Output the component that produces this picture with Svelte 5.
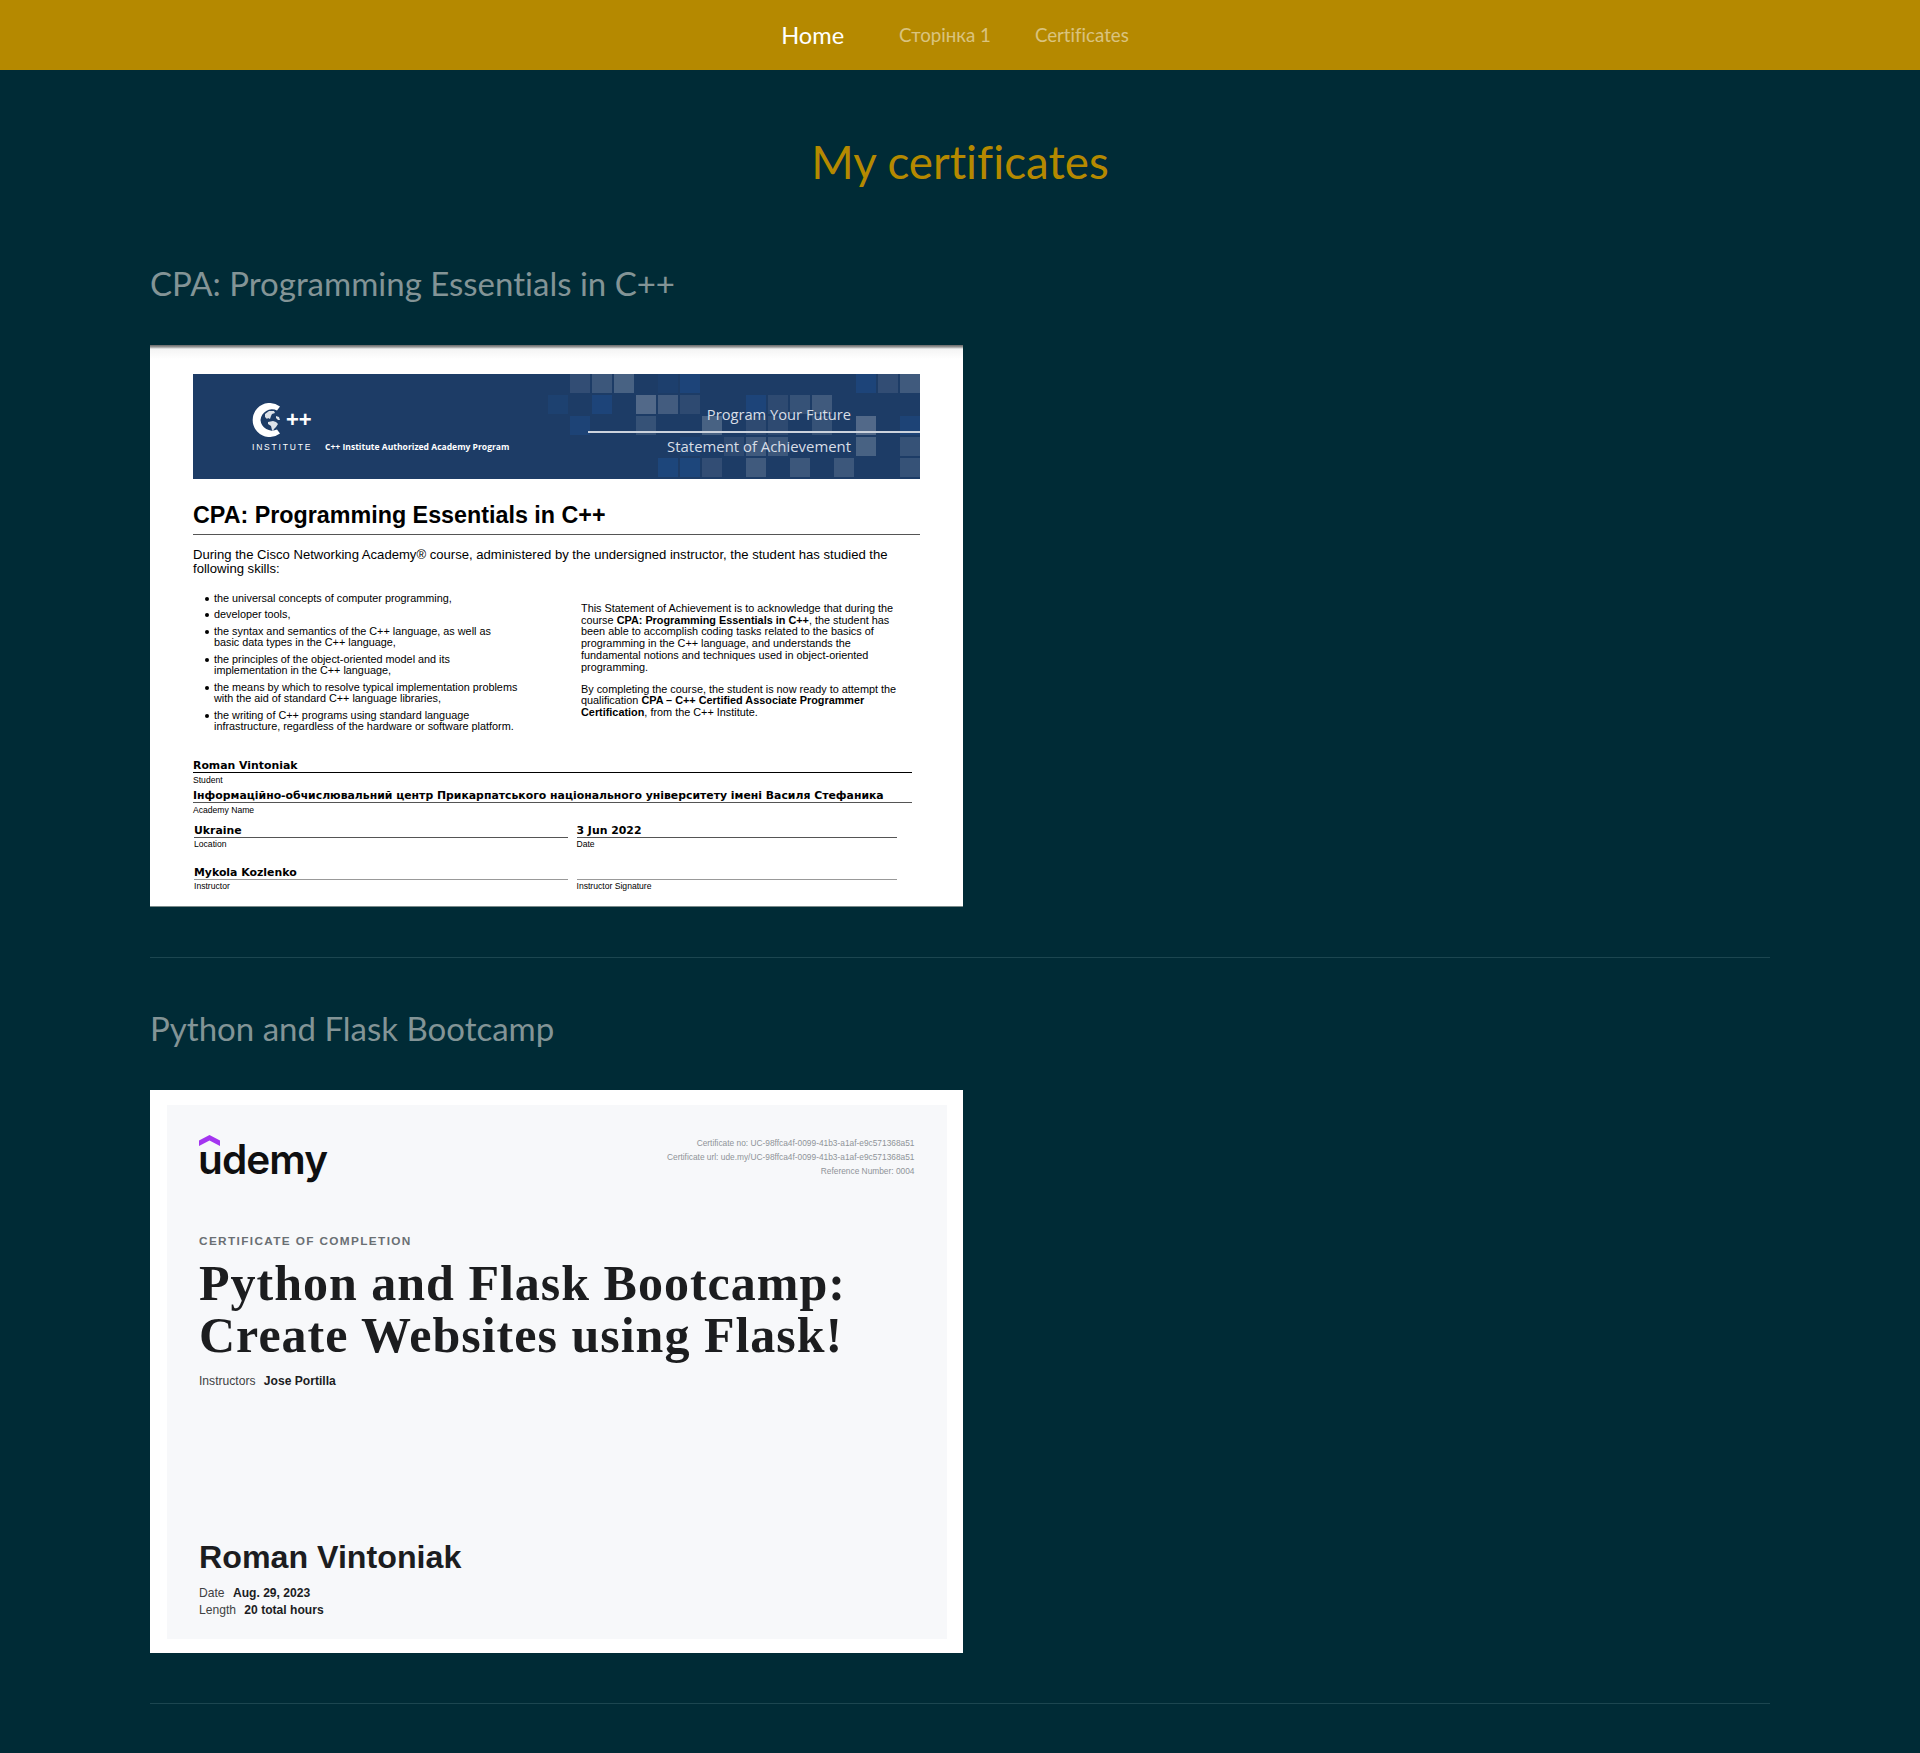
<script>
    // nav entries
    const links = [
        { label: 'Home', active: true },
        { label: 'Сторінка 1' },
        { label: 'Certificates' }
    ];

    // banner mosaic: [row, col, opacity, blue?]
    const cells = [
        [0, 1, 0.12], [0, 2, 0.18], [0, 3, 0.25], [0, 5, 0.25, true], [0, 6, 0.6, true], [0, 14, 0.6, true], [0, 15, 0.12], [0, 16, 0.2],
        [1, 0, 0.35, true], [1, 2, 0.6, true], [1, 4, 0.3], [1, 5, 0.22], [1, 6, 0.1], [1, 9, 0.6, true], [1, 10, 0.1], [1, 11, 0.15], [1, 12, 0.2],
        [2, 1, 0.5, true], [2, 4, 0.15], [2, 7, 0.25], [2, 9, 0.1], [2, 10, 0.1], [2, 12, 0.15], [2, 14, 0.3], [2, 16, 0.5, true],
        [3, 6, 0.4, true], [3, 8, 0.1], [3, 9, 0.2], [3, 10, 0.18], [3, 14, 0.25], [3, 16, 0.15],
        [4, 5, 0.7, true], [4, 6, 0.7, true], [4, 7, 0.12], [4, 9, 0.2], [4, 11, 0.18], [4, 13, 0.18], [4, 16, 0.15]
    ];

    const skills = [
        'the universal concepts of computer programming,',
        'developer tools,',
        'the syntax and semantics of the C++ language, as well as basic data types in the C++ language,',
        'the principles of the object-oriented model and its implementation in the C++ language,',
        'the means by which to resolve typical implementation problems with the aid of standard C++ language libraries,',
        'the writing of C++ programs using standard language infrastructure, regardless of the hardware or software platform.'
    ];
</script>

<nav class="navbar">
    {#each links as link}
        <a href="#top" class:active={link.active}>{link.label}</a>
    {/each}
</nav>

<main>
    <h1>My certificates</h1>

    <section>
        <h2>CPA: Programming Essentials in C++</h2>

        <div class="cert cpa">
            <div class="banner">
                <div class="mosaic">
                    {#each cells as [row, col, alpha, blue]}
                        <span
                            class:blue
                            style="grid-row: {row + 1}; grid-column: {col + 1}; opacity: {alpha}"
                        ></span>
                    {/each}
                </div>

                <div class="inst">
                    <div class="inst-logo">
                        <svg width="32" height="34" viewBox="0 0 32 34">
                            <path fill="#fff" d="M28 3.5A17 17 0 1 0 28 30.5L25 26.5A11.5 11.5 0 0 1 8.5 17 11.5 11.5 0 0 1 25 7.5Z" />
                            <g fill="#fff" opacity="0.85">
                                <path d="M13 11l4-3 5 0 1 2-3 1-1 2-1 3-2-1-1 1-2-2z" />
                                <path d="M16 19l5-1 3 1 2 2-2 3-2 2-1 2-1-1-1-4-3-2z" />
                                <path d="M24 13l3 1 1 3-2 0-2-2z" />
                            </g>
                        </svg>
                        <span class="plus">++</span>
                    </div>
                    <div class="inst-line">
                        <span class="inst-name">INSTITUTE</span>
                        <span class="inst-prog">C++ Institute Authorized Academy Program</span>
                    </div>
                </div>

                <div class="future">Program Your Future</div>
                <div class="future-line"></div>
                <div class="statement">Statement of Achievement</div>
            </div>

            <h3>CPA: Programming Essentials in C++</h3>
            <p class="lead">During the Cisco Networking Academy® course, administered by the undersigned instructor, the student has studied the following skills:</p>

            <div class="columns">
                <ul>
                    {#each skills as skill}
                        <li>{skill}</li>
                    {/each}
                </ul>
                <div class="statement-text">
                    <p>This Statement of Achievement is to acknowledge that during the course <b>CPA: Programming Essentials in C++</b>, the student has been able to accomplish coding tasks related to the basics of programming in the C++ language, and understands the fundamental notions and techniques used in object-oriented programming.</p>
                    <p>By completing the course, the student is now ready to attempt the qualification <b>CPA – C++ Certified Associate Programmer Certification</b>, from the C++ Institute.</p>
                </div>
            </div>

            <div class="signatures">
                <div class="sign student">
                    <div class="val">Roman Vintoniak</div>
                    <div class="lbl">Student</div>
                </div>
                <div class="sign academy">
                    <div class="val">Інформаційно-обчислювальний центр Прикарпатського національного університету імені Василя Стефаника</div>
                    <div class="lbl">Academy Name</div>
                </div>
                <div class="sign-grid first">
                    <div class="sign">
                        <div class="val">Ukraine</div>
                        <div class="lbl">Location</div>
                    </div>
                    <div class="sign">
                        <div class="val">3 Jun 2022</div>
                        <div class="lbl">Date</div>
                    </div>
                </div>
                <div class="sign-grid second">
                    <div class="sign">
                        <div class="val">Mykola Kozlenko</div>
                        <div class="lbl">Instructor</div>
                    </div>
                    <div class="sign">
                        <div class="val">&nbsp;</div>
                        <div class="lbl">Instructor Signature</div>
                    </div>
                </div>
            </div>
        </div>
    </section>

    <hr />

    <section>
        <h2>Python and Flask Bootcamp</h2>

        <div class="cert udemy">
            <div class="sheet">
                <div class="sheet-top">
                    <div class="logo">
                        <svg width="21" height="11" viewBox="0 0 21 11">
                            <path fill="#a435f0" d="M10.5 0L21 5.5V11L10.5 5.5 0 11V5.5Z" />
                        </svg>
                        <span>udemy</span>
                    </div>
                    <div class="refs">
                        <div>Certificate no: UC-98ffca4f-0099-41b3-a1af-e9c571368a51</div>
                        <div>Certificate url: ude.my/UC-98ffca4f-0099-41b3-a1af-e9c571368a51</div>
                        <div>Reference Number: 0004</div>
                    </div>
                </div>

                <div class="completion">CERTIFICATE OF COMPLETION</div>
                <div class="course">Python and Flask Bootcamp:<br />Create Websites using Flask!</div>
                <div class="meta instructors">Instructors <b>Jose Portilla</b></div>

                <div class="person">Roman Vintoniak</div>
                <div class="meta">Date <b>Aug. 29, 2023</b></div>
                <div class="meta">Length <b>20 total hours</b></div>
            </div>
        </div>
    </section>

    <hr />
</main>

<style>
    :global(body) {
        background: #002b36;
    }

    .navbar {
        height: 70px;
        box-sizing: border-box;
        background: #b58900;
        display: flex;
        align-items: center;
        justify-content: center;
        gap: 44px;
        padding-right: 10px;
        font-family: Lato, "Noto Sans", sans-serif;
        font-variant-ligatures: none;
    }

    .navbar a {
        color: rgba(255, 255, 255, 0.5);
        font-size: 18.7px;
        text-decoration: none;
    }

    .navbar a.active {
        color: #fff;
        font-size: 23.6px;
        margin-right: 11px;
    }

    main {
        padding: 64px 150px 50px;
        font-family: Lato, "Noto Sans", sans-serif;
        font-variant-ligatures: none;
    }

    h1 {
        margin: 0 0 73px;
        text-align: center;
        color: #b58900;
        font-size: 45.8px;
        font-weight: 400;
        line-height: 56px;
    }

    h2 {
        margin: 0 0 42px;
        color: #839496;
        font-size: 33px;
        font-weight: 400;
        line-height: 40px;
    }

    hr {
        margin: 50px 0;
        border: 0;
        border-top: 1px solid #1c4650;
    }

    main > hr:last-child {
        margin-bottom: 0;
    }

    .cert {
        width: 813px;
        background: #fff;
        box-sizing: border-box;
    }

    /* first certificate */
    .cpa {
        height: 562px;
        padding: 29px 43px 0;
        color: #000;
        font-family: "Liberation Sans", Arial, sans-serif;
        background: linear-gradient(#666 0, #999 2px, #f4f4f4 4px, #fff 14px);
        border-bottom: 1px solid #7a8a8a;
    }

    .banner {
        position: relative;
        height: 105px;
        background: #1d3c66;
        color: #d8dee6;
    }

    .mosaic {
        position: absolute;
        top: 0;
        left: 355px;
        display: grid;
        grid-template-columns: repeat(17, 20px);
        grid-template-rows: repeat(5, 19px);
        gap: 2px;
        opacity: 0.78;
    }

    .mosaic span {
        background: #fff;
    }

    .mosaic span.blue {
        background: #1f4f8f;
    }

    .inst {
        position: absolute;
        top: 29px;
        left: 59px;
        color: #fff;
    }

    .inst-logo {
        display: flex;
        align-items: center;
        height: 34px;
    }

    .plus {
        margin-left: 2px;
        font-size: 22px;
        font-weight: 700;
        line-height: 34px;
    }

    .inst-line {
        display: flex;
        align-items: center;
        margin-top: 5px;
        height: 10px;
        white-space: nowrap;
    }

    .inst-name {
        width: 73px;
        font-size: 8.5px;
        letter-spacing: 1.8px;
    }

    .inst-prog {
        font-family: "Open Sans", sans-serif;
        font-size: 8.55px;
        font-weight: 700;
    }

    .future,
    .statement {
        position: absolute;
        right: 69px;
        font-family: "Open Sans", sans-serif;
        white-space: nowrap;
        line-height: 18px;
    }

    .future {
        top: 31px;
        font-size: 14.7px;
    }

    .statement {
        top: 63px;
        font-size: 14.9px;
    }

    .future-line {
        position: absolute;
        top: 57px;
        left: 395px;
        right: 0;
        height: 1.5px;
        background: #ccd3dd;
    }

    h3 {
        margin: 24px 0 0;
        padding-bottom: 7px;
        border-bottom: 1.5px solid #555;
        font-size: 23.3px;
        font-weight: 700;
        line-height: 24px;
    }

    .lead {
        margin: 13px 0 0;
        font-size: 13.1px;
        line-height: 14px;
        width: 700px;
    }

    .columns {
        display: flex;
        margin-top: 16.5px;
    }

    ul {
        width: 325.5px;
        box-sizing: border-box;
        flex: none;
        margin: 0;
        padding: 0 0 0 21px;
        list-style: none;
        font-size: 10.84px;
        line-height: 11.5px;
    }

    li {
        position: relative;
        margin-bottom: 5px;
    }

    li::before {
        content: '';
        position: absolute;
        left: -9px;
        top: 4px;
        width: 4px;
        height: 4px;
        border-radius: 50%;
        background: #000;
    }

    li:last-child {
        margin-bottom: 0;
    }

    .statement-text {
        width: 316px;
        margin: 10.5px 0 0 62.5px;
        font-size: 10.86px;
        line-height: 11.7px;
    }

    .statement-text p {
        margin: 0 0 10.4px;
    }

    .signatures {
        margin: 27.5px 8px 0 0;
    }

    .sign .val {
        font-family: "DejaVu Sans", sans-serif;
        font-weight: 700;
        font-size: 10.9px;
        line-height: 12px;
        border-bottom: 1px solid #555;
        white-space: nowrap;
    }

    .sign .lbl {
        margin-top: 2.5px;
        font-size: 8.6px;
        line-height: 9px;
    }

    .student .val {
        border-bottom: 1.5px solid #000;
    }

    .academy {
        margin-top: 5.5px;
    }

    .academy .val {
        font-size: 10.86px;
    }

    .sign-grid {
        display: grid;
        grid-template-columns: 374px 320.5px;
        column-gap: 8.5px;
        margin-left: 1px;
    }

    .sign-grid.first {
        margin-top: 10px;
    }

    .sign-grid.second {
        margin-top: 17.5px;
    }

    .sign-grid.second .val {
        border-bottom: 1.5px solid #999;
    }

    /* second certificate */
    .udemy {
        height: 563px;
        padding: 15px 16.5px 14px 17px;
    }

    .sheet {
        height: 534px;
        box-sizing: border-box;
        padding: 30px 32px 0;
        background: #f7f8fa;
        color: #1c1d1f;
        font-family: "Liberation Sans", Arial, sans-serif;
    }

    .sheet-top {
        display: flex;
        justify-content: space-between;
        height: 99px;
    }

    .logo {
        position: relative;
        height: 46px;
        width: 130px;
    }

    .logo svg {
        position: absolute;
        left: 0;
        top: 0;
        display: block;
    }

    .logo span {
        position: absolute;
        left: -1px;
        top: 2px;
        font-family: Inter, sans-serif;
        font-weight: 600;
        font-size: 40.5px;
        line-height: 46px;
        letter-spacing: -0.9px;
        color: #0f0f10;
    }

    .refs {
        padding-top: 0.5px;
        text-align: right;
        color: #8f9499;
        font-size: 8.35px;
        line-height: 14px;
    }

    .completion {
        color: #6a6f73;
        font-size: 11.8px;
        font-weight: 700;
        letter-spacing: 1.36px;
        line-height: 14px;
    }

    .course {
        margin-top: 9px;
        font-family: "Liberation Serif", serif;
        font-weight: 700;
        font-size: 50px;
        letter-spacing: 1px;
        line-height: 52px;
        white-space: nowrap;
    }

    .meta {
        font-size: 12.1px;
        line-height: 17px;
        color: #3e4143;
    }

    .meta b {
        margin-left: 5px;
        color: #1c1d1f;
    }

    .instructors {
        margin-top: 11.5px;
    }

    .person {
        margin: 149.5px 0 9.5px;
        font-size: 32.2px;
        font-weight: 700;
        line-height: 36px;
    }
</style>
